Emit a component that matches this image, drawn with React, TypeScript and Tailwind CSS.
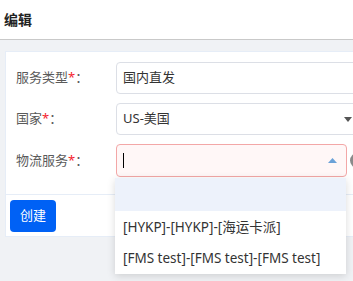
import React from "react";

const font = { fontFamily: '"Noto Sans", "Noto Sans CJK SC", sans-serif' };

function Label({ text }: { text: string }) {
  return (
    <div className="w-[100px] shrink-0 text-[13px] text-[#5a5a5a]">
      {text}
      <span className="text-[#f5222d]">*</span>：
    </div>
  );
}

export default function App() {
  return (
    <div className="relative w-[353px] h-[281px] overflow-hidden bg-[#f0f2f5]" style={font}>
      <div className="h-[40px] bg-white border-b border-[#c9c9c9] flex items-center px-[4px]">
        <span className="text-[14px] font-bold text-[#222] leading-none">编辑</span>
      </div>
      <div className="pt-[11px] pl-[5px]">
        <div className="w-[380px] bg-white border border-[#e6edf7]">
          <div className="pt-[10px] pl-[10px] pb-[17px] flex flex-col gap-[9px]">
            <div className="flex items-center">
              <Label text="服务类型" />
              <div className="w-[245px] h-[32px] border border-[#dcdfe6] rounded-[4px] flex items-center px-[6px] text-[13px] text-[#333]">
                国内直发
              </div>
            </div>
            <div className="flex items-center">
              <Label text="国家" />
              <div className="w-[245px] h-[32px] border border-[#dcdfe6] rounded-[4px] flex items-center justify-between px-[6px] text-[13px] text-[#333]">
                <span>US-美国</span>
                <svg width="8" height="5" viewBox="0 0 8 5" className="mr-[2px]">
                  <path d="M0 0 L8 0 L4 5 Z" fill="#555" />
                </svg>
              </div>
            </div>
            <div className="flex items-center">
              <Label text="物流服务" />
              <div className="w-[231px] h-[33px] border border-[#f3a7a7] bg-[#fff7f7] rounded-[4px] flex items-center justify-between pl-[6px] pr-[9px]">
                <span className="w-[1px] h-[15px] bg-black" />
                <svg width="9" height="5" viewBox="0 0 9 5">
                  <path d="M0 5 L9 5 L4.5 0 Z" fill="#6aa2d8" />
                </svg>
              </div>
              <div className="ml-[3px] w-[15px] h-[15px] rounded-full bg-[#8a8a8a]" />
            </div>
          </div>
          <div className="border-t border-[#e6edf7] pt-[5px] pb-[4px] pl-[4px]">
            <button className="w-[46px] h-[32px] rounded-[4px] bg-[#0061f5] text-white text-[13px] flex items-center justify-center">
              创建
            </button>
          </div>
        </div>
      </div>
      <div className="absolute left-[115px] top-[178px] w-[231px] bg-white shadow-[0_2px_8px_rgba(0,0,0,0.15)] text-[13.5px] text-[#333]">
        <div className="h-[33px] bg-[#edf2fb]" />
        <div className="h-[32px] flex items-center px-[8px]">[HYKP]-[HYKP]-[海运卡派]</div>
        <div className="h-[31px] flex items-center px-[8px]">[FMS test]-[FMS test]-[FMS test]</div>
      </div>
    </div>
  );
}
